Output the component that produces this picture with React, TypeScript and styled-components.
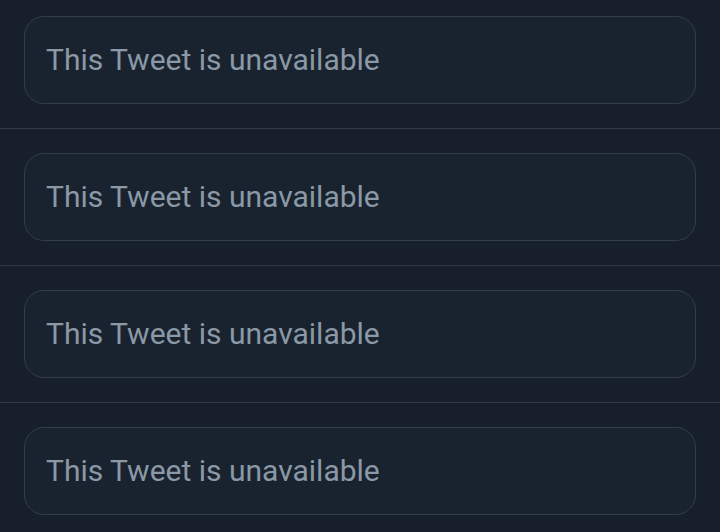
import React from "react";
import styled, { createGlobalStyle } from "styled-components";

const GlobalStyle = createGlobalStyle`
  html, body {
    margin: 0;
    padding: 0;
    background: #161f2a;
  }
  body {
    font-family: Roboto, "Noto Sans", "Liberation Sans", sans-serif;
  }
`;

const Timeline = styled.div`
  display: flex;
  flex-direction: column;
  background: #161f2a;
`;

const Row = styled.div`
  padding: 24px 24px 24px;
  border-bottom: 1px solid #303b46;

  &:first-child {
    padding-top: 16px;
  }
`;

const Notice = styled.div`
  height: 86px;
  display: flex;
  align-items: center;
  padding: 0 21px;
  background: #19232f;
  border: 1px solid #323e4a;
  border-radius: 20px;
  color: #8b98a5;
  font-size: 30px;
  line-height: 1;
`;

const App = () => {
  const items = [0, 1, 2, 3];
  return (
    <>
      <GlobalStyle />
      <Timeline>
        {items.map((i) => (
          <Row key={i}>
            <Notice>This Tweet is unavailable</Notice>
          </Row>
        ))}
      </Timeline>
    </>
  );
};

export default App;
